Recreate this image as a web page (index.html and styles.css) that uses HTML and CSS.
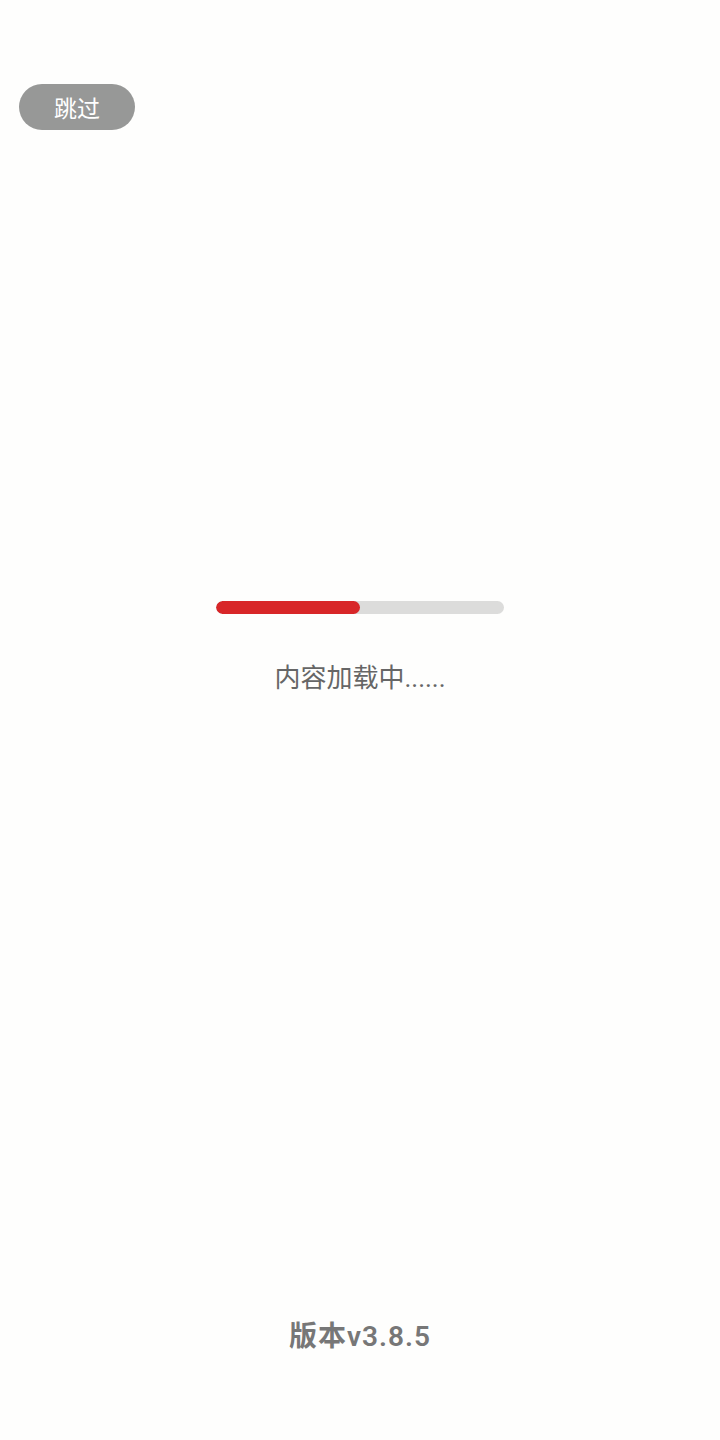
FILE: index.html
```html
<!DOCTYPE html>
<html lang="zh">
<head>
<meta charset="utf-8">
<link rel="stylesheet" href="styles.css">
</head>
<body>
<div class="page">
  <div class="top">
    <button class="skip">跳过</button>
  </div>
  <div class="loader">
    <div class="bar"><div class="fill" style="width:50%"></div></div>
    <div class="label">内容加载中......</div>
  </div>
  <div class="version">版本v3.8.5</div>
</div>
</body>
</html>
```
FILE: styles.css
```css
html, body {
  margin: 0;
  padding: 0;
  background: #fefefd;
}
.page {
  width: 720px;
  height: 1440px;
  display: flex;
  flex-direction: column;
  font-family: Roboto, "Noto Sans CJK SC", sans-serif;
}
.top {
  padding: 84px 0 0 19px;
  height: 46px;
}
.skip {
  display: flex;
  align-items: center;
  justify-content: center;
  width: 116px;
  height: 46px;
  border: none;
  border-radius: 23px;
  background: #979897;
  color: #ffffff;
  font-family: Roboto, "Noto Sans CJK SC", sans-serif;
  font-size: 23px;
  padding: 0;
}
.loader {
  margin-top: 471px;
  display: flex;
  flex-direction: column;
  align-items: center;
}
.bar {
  width: 288px;
  height: 13px;
  border-radius: 7px;
  background: #dcdcdb;
  overflow: hidden;
}
.fill {
  height: 100%;
  border-radius: 7px;
  background: #d82628;
}
.label {
  margin-top: 45px;
  font-size: 26px;
  line-height: 38px;
  color: #666666;
}
.version {
  margin-top: auto;
  margin-bottom: 83px;
  text-align: center;
  font-size: 28px;
  line-height: 40px;
  font-weight: 600;
  letter-spacing: 1px;
  color: #777777;
}
```
